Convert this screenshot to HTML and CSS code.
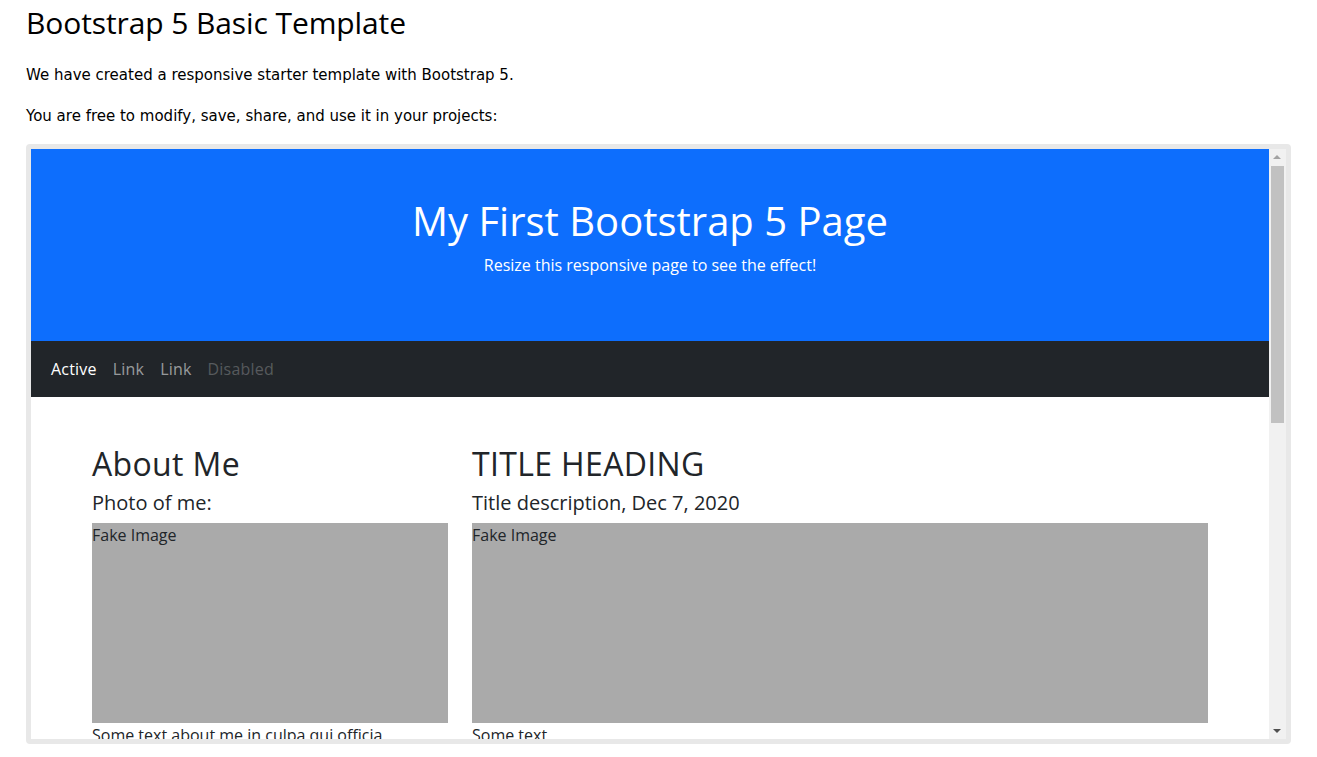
FILE: index.html
```html
<!DOCTYPE html>
<html lang="en">
<head>
<meta charset="utf-8">
<title>Bootstrap 5 Basic Template</title>
<link rel="stylesheet" href="styles.css">
</head>
<body>
<div class="page">
  <h1 class="page-title">Bootstrap 5 Basic Template</h1>
  <p class="intro">We have created a responsive starter template with Bootstrap 5.</p>
  <p class="intro">You are free to modify, save, share, and use it in your projects:</p>
  <div class="frame">
    <div class="frame-view">
      <div class="jumbo">
        <h1 class="jumbo-title">My First Bootstrap 5 Page</h1>
        <p class="jumbo-sub">Resize this responsive page to see the effect!</p>
      </div>
      <nav class="navbar">
        <a class="nav-link active">Active</a>
        <a class="nav-link">Link</a>
        <a class="nav-link">Link</a>
        <a class="nav-link disabled">Disabled</a>
      </nav>
      <div class="container">
        <div class="col col-side">
          <h2 class="h2">About Me</h2>
          <h5 class="h5">Photo of me:</h5>
          <div class="fakeimg">Fake Image</div>
          <p class="txt">Some text about me in culpa qui officia deserunt mollit anim..</p>
        </div>
        <div class="col col-main">
          <h2 class="h2">TITLE HEADING</h2>
          <h5 class="h5">Title description, Dec 7, 2020</h5>
          <div class="fakeimg">Fake Image</div>
          <p class="txt">Some text..</p>
        </div>
      </div>
    </div>
    <div class="scrollbar">
      <div class="sb-arrow sb-up"></div>
      <div class="sb-track"><div class="sb-thumb"></div></div>
      <div class="sb-arrow sb-down"></div>
    </div>
  </div>
</div>
</body>
</html>
```

FILE: styles.css
```css
html, body {
  margin: 0;
  padding: 0;
  background: #ffffff;
}
.page {
  padding: 0 26px 0 26px;
  width: 1265px;
}
.page-title {
  margin: 0;
  padding-top: 3px;
  font-family: "Open Sans", "Noto Sans", sans-serif;
  font-weight: 400;
  font-size: 30px;
  line-height: 40px;
  color: #000;
  letter-spacing: -0.1px;
}
.intro {
  margin: 23px 0 0 0;
  font-family: "DejaVu Sans", Verdana, sans-serif;
  font-size: 15px;
  line-height: 19px;
  color: #000;
}
.intro + .intro {
  margin-top: 22px;
}
.frame {
  margin-top: 18px;
  height: 590px;
  border: 5px solid #e8e8e8;
  border-radius: 4px;
  display: flex;
  overflow: hidden;
}
.frame-view {
  flex: 1;
  overflow: hidden;
  font-family: "Open Sans", "Noto Sans", sans-serif;
  color: #212529;
  font-size: 16px;
  line-height: 24px;
}
.jumbo {
  background: #0d6efd;
  color: #fff;
  padding: 48px;
  text-align: center;
}
.jumbo-title {
  margin: 0 0 8px 0;
  font-weight: 400;
  font-size: 40px;
  line-height: 48px;
}
.jumbo-sub {
  margin: 0 0 16px 0;
  font-size: 16px;
}
.navbar {
  background: #212529;
  height: 56px;
  box-sizing: border-box;
  padding: 8px 12px;
  display: flex;
  align-items: center;
}
.nav-link {
  padding: 8px;
  color: rgba(255,255,255,0.55);
  font-size: 16px;
  letter-spacing: 0.2px;
}
.nav-link.active { color: #fff; }
.nav-link.disabled { color: rgba(255,255,255,0.25); }
.container {
  width: 1140px;
  margin: 48px auto 0;
  display: flex;
}
.col {
  padding: 0 12px;
  box-sizing: border-box;
}
.col-side { width: 380px; }
.col-main { width: 760px; }
.h2 {
  margin: 0 0 8px 0;
  font-weight: 400;
  font-size: 32px;
  line-height: 38.4px;
  letter-spacing: 0.35px;
}
.h5 {
  margin: 0 0 8px 0;
  font-weight: 400;
  font-size: 20px;
  line-height: 24px;
}
.fakeimg {
  height: 200px;
  background: #aaaaaa;
}
.txt {
  margin: 0;
}
.scrollbar {
  width: 17px;
  background: #f1f1f1;
  display: flex;
  flex-direction: column;
}
.sb-arrow {
  height: 17px;
  position: relative;
}
.sb-up::after, .sb-down::after {
  content: "";
  position: absolute;
  left: 4px;
  width: 0;
  height: 0;
  border-left: 4px solid transparent;
  border-right: 4px solid transparent;
}
.sb-up::after {
  top: 6px;
  border-bottom: 4px solid #a3a3a3;
}
.sb-down::after {
  top: 7px;
  border-top: 4px solid #505050;
}
.sb-track {
  flex: 1;
  padding: 0 2px;
}
.sb-thumb {
  height: 257px;
  background: #c1c1c1;
}
```
